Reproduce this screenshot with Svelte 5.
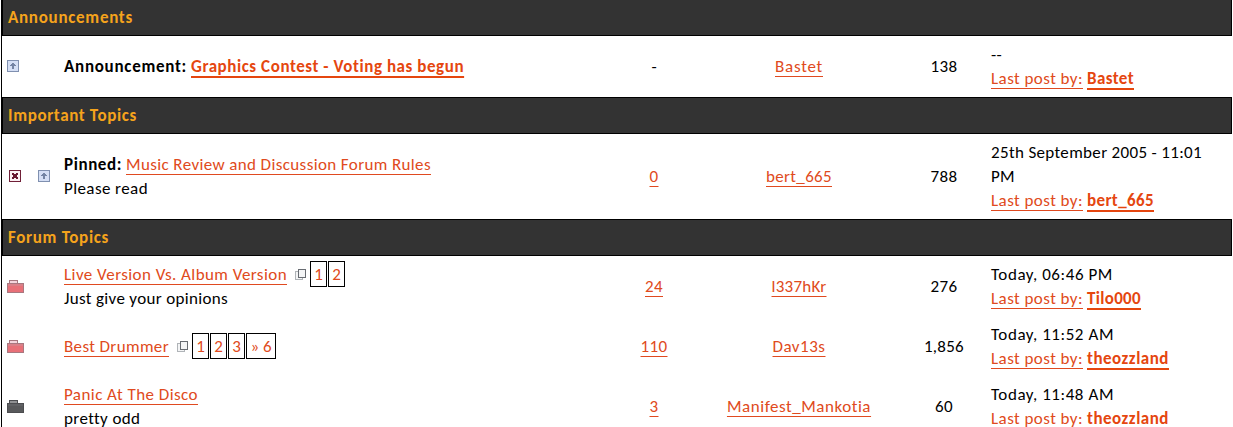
<script>
  const sections = [
    {
      title: 'Announcements', tw: 125,
      rows: [
        { h: 61, icon: 'up', prefix: 'Announcement:', pw: 123, title: 'Graphics Contest - Voting has begun', w: 273, bold: true,
          replies: '-', starter: 'Bastet', sw: 48, views: '138', vw: 27, date: ['--'], dw: [11], by: 'Bastet', bw: 47 }
      ]
    },
    {
      title: 'Important Topics', tw: 129,
      rows: [
        { h: 85, icon: 'closed', marker: true, prefix: 'Pinned:', pw: 58, title: 'Music Review and Discussion Forum Rules', w: 305,
          sub: 'Please read', subw: 84, replies: '0', rw: 9, starter: 'bert_665', sw: 66, views: '788', vw: 27,
          date: ['25th September 2005 - 11:01', 'PM'], dw: [211, 24], by: 'bert_665', bw: 67 }
      ]
    },
    {
      title: 'Forum Topics', tw: 101,
      rows: [
        { h: 60, icon: 'hot', title: 'Live Version Vs. Album Version', w: 223, sub: 'Just give your opinions', subw: 164, pages: ['1', '2'],
          replies: '24', rw: 18, starter: 'l337hKr', sw: 55, views: '276', vw: 27, date: ['Today, 06:46 PM'], dw: [122], by: 'Tilo000', bw: 54 },
        { h: 60, icon: 'hot', title: 'Best Drummer', w: 105, pages: ['1', '2', '3', '» 6'],
          replies: '110', rw: 27, starter: 'Dav13s', sw: 53, views: '1,856', vw: 40, date: ['Today, 11:52 AM'], dw: [123], by: 'theozzland', bw: 82 },
        { h: 60, icon: 'read', title: 'Panic At The Disco', w: 134, sub: 'pretty odd', subw: 76,
          replies: '3', rw: 9, starter: 'Manifest_Mankotia', sw: 144, views: '60', vw: 18, date: ['Today, 11:48 AM'], dw: [123], by: 'theozzland', bw: 82 }
      ]
    }
  ];

  function fit(node, width) {
    if (!width) return;
    const natural = node.getBoundingClientRect().width;
    node.style.letterSpacing = (width - natural) / node.textContent.length + 'px';
  }
</script>

{#snippet up()}
  <svg width="12" height="12" shape-rendering="crispEdges">
    <rect x=".5" y=".5" width="11" height="11" fill="#d5dff5" stroke="#8090b0" />
    <path d="M5 3h2v1h1v1h1v1H7v3H5V6H3V5h1V4h1z" fill="#7484a4" />
  </svg>
{/snippet}

{#snippet briefcase(body, top, edge, lid)}
  <svg width="17" height="13" shape-rendering="crispEdges">
    <path d="M2.5 4V.5h8V4" fill={lid} stroke={edge} />
    <rect y="3" width="17" height="10" fill={edge} />
    <rect x="1" y="4" width="15" height="2" fill={top} />
    <rect x="1" y="6" width="15" height="6" fill={body} />
  </svg>
{/snippet}

<main>
  {#each sections as section}
    <h2><span use:fit={section.tw}>{section.title}</span></h2>
    {#each section.rows as row}
      <div class="row" class:even={row.h === 60} style:height="{row.h}px">
        <div class="state" class:inset={row.icon === 'closed'}>
          {#if row.icon === 'up'}
            {@render up()}
          {:else if row.icon === 'closed'}
            <svg width="12" height="12" shape-rendering="crispEdges">
              <rect x=".5" y=".5" width="11" height="11" fill="#fbf0f3" stroke="#702038" />
              <path d="M3 3h2v1h2V3h2v2H8v2h1v2H7V8H5v1H3V7h1V5H3z" fill="#681830" />
            </svg>
          {:else if row.icon === 'hot'}
            {@render briefcase('#e87078', '#d98088', '#a87880', '#f5d4dc')}
          {:else}
            {@render briefcase('#58595b', '#606164', '#4c4d50', '#909193')}
          {/if}
        </div>
        <div class="marker">{#if row.marker}{@render up()}{/if}</div>
        <div class="topic">
          <div class="line">
            {#if row.prefix}<b class="prefix" use:fit={row.pw}>{row.prefix}</b>{/if}
            <a href="#topic" class:bold={row.bold} use:fit={row.w}>{row.title}</a>
            {#if row.pages}
              <span class="pages">
                <svg width="11" height="11" shape-rendering="crispEdges">
                  <rect x=".5" y="2.5" width="7" height="8" fill="#f4f5f6" stroke="#b0b4b8" />
                  <rect x="3.5" y=".5" width="7" height="8" fill="#f4f5f6" stroke="#686c72" />
                </svg>
                {#each row.pages as page}
                  <span class="page" class:last={page.length > 1}>{page}</span>
                {/each}
              </span>
            {/if}
          </div>
          {#if row.sub}<div class="line"><span use:fit={row.subw}>{row.sub}</span></div>{/if}
        </div>
        <div class="center">
          {#if row.rw}<a href="#replies" use:fit={row.rw}>{row.replies}</a>{:else}<span>{row.replies}</span>{/if}
        </div>
        <div class="center starter"><a href="#starter" use:fit={row.sw}>{row.starter}</a></div>
        <div class="center"><span use:fit={row.vw}>{row.views}</span></div>
        <div class="last-post">
          {#each row.date as text, i}
            <div class="line"><span use:fit={row.dw[i]}>{text}</span></div>
          {/each}
          <div class="line gap">
            <a href="#last" use:fit={92}>Last post by:</a>
            <a href="#user" class="bold" use:fit={row.bw}>{row.by}</a>
          </div>
        </div>
      </div>
    {/each}
  {/each}
</main>

<style>
  :global(body) { background: #fff; overflow: hidden; }
  main {
    box-sizing: border-box;
    width: 1232px;
    height: 427px;
    margin-left: 1px;
    border-left: 1px solid #000;
    overflow: hidden;
    font: 17px/24px Carlito, Lato, sans-serif;
    color: #000;
    display: flex;
    flex-direction: column;
  }
  h2 {
    box-sizing: border-box;
    flex: none;
    width: 1230px;
    height: 37px;
    margin: 0;
    padding: 6px 5px;
    border: 1px solid #000;
    background: #333;
    color: #f5a31c;
    font-size: 17px;
    line-height: 24px;
    font-weight: 700;
  }
  h2:first-child { margin-top: -1px; }
  .row {
    flex: none;
    display: grid;
    grid-template-columns: 36px 26px 540px 100px 189px 102px 1fr;
    align-items: center;
  }
  .row.even { box-sizing: border-box; padding-top: 1px; }
  svg { display: block; flex: none; }
  .state, .marker { padding-bottom: 1px; }
  .state { padding-left: 5px; }
  .state.inset { padding-left: 7px; }
  .line { display: flex; height: 24px; white-space: nowrap; }
  .prefix { margin-right: 4px; }
  .center { display: flex; justify-content: center; }
  .starter { padding-left: 1px; }
  .last-post { margin-left: -4px; }
  .gap { gap: 4px; }
  a {
    color: #e04a20;
    text-decoration: underline 1px;
    text-underline-offset: 4px;
    text-decoration-skip-ink: none;
  }
  .bold { color: #e5460f; font-weight: 700; text-decoration-thickness: 2px; text-underline-offset: 4px; }
  .pages { display: flex; align-items: center; margin-left: 8px; }
  .pages svg { margin: -1px 4px 0 0; }
  .page {
    box-sizing: border-box;
    width: 17px;
    height: 26px;
    margin: -2px 1px 0 0;
    border: 1px solid #000;
    line-height: 26px;
    text-align: center;
    color: #e04a20;
  }
  .page.last { width: 30px; }
</style>
